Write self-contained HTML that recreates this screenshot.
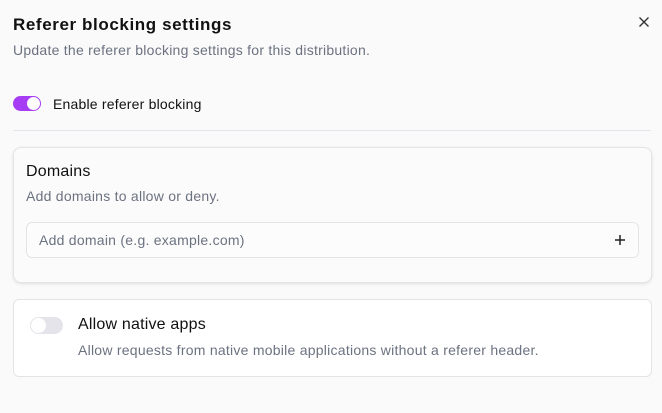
<!DOCTYPE html>
<html><head><style>
*{box-sizing:border-box;margin:0;padding:0}
body{width:662px;height:413px;background:#fafafa;font-family:"Liberation Sans",sans-serif;position:relative;overflow:hidden;color:#111}
.a{position:absolute;white-space:nowrap}
.s{font-size:14px;color:#6b7280;letter-spacing:0.25px}
</style></head><body>
<div class="a" style="left:13px;top:15px;font-size:17px;font-weight:bold;color:#111;letter-spacing:0.6px">Referer blocking settings</div>
<svg class="a" style="left:638px;top:16px" width="12" height="12" viewBox="0 0 12 12"><path d="M1.5 1.5L10.5 10.5M10.5 1.5L1.5 10.5" stroke="#333" stroke-width="1.4"/></svg>
<div class="a s" style="left:13px;top:42px">Update the referer blocking settings for this distribution.</div>
<div class="a" style="left:13px;top:96px;width:28px;height:15px;border-radius:8px;background:#a73cf5"></div>
<div class="a" style="left:27px;top:97px;width:13px;height:13px;border-radius:50%;background:#fff"></div>
<div class="a" style="left:53px;top:96px;font-size:14px;color:#111;letter-spacing:0.2px">Enable referer blocking</div>
<div class="a" style="left:13px;top:130px;width:638px;height:1px;background:#e4e4ea"></div>
<div class="a" style="left:13px;top:147px;width:639px;height:136px;border:1px solid #e4e4e7;border-radius:8px;background:#fbfbfb;box-shadow:0 1px 3px rgba(0,0,0,.1)"></div>
<div class="a" style="left:26px;top:163px;font-size:16px;color:#111;letter-spacing:0.2px">Domains</div>
<div class="a s" style="left:26px;top:188px">Add domains to allow or deny.</div>
<div class="a" style="left:26px;top:222px;width:613px;height:36px;border:1px solid #e4e4e7;border-radius:6px;background:#fcfcfc"></div>
<div class="a s" style="left:39px;top:232px">Add domain (e.g. example.com)</div>
<svg class="a" style="left:614px;top:234px" width="12" height="12" viewBox="0 0 12 12"><path d="M6 1V11M1 6H11" stroke="#222" stroke-width="1.5"/></svg>
<div class="a" style="left:13px;top:299px;width:639px;height:78px;border:1px solid #e4e4e7;border-radius:6px;background:#fff"></div>
<div class="a" style="left:30px;top:317px;width:33px;height:17px;border-radius:9px;background:#e4e4ea"></div>
<div class="a" style="left:31px;top:318px;width:15px;height:15px;border-radius:50%;background:#fff"></div>
<div class="a" style="left:78px;top:316px;font-size:16px;color:#111;letter-spacing:0.2px">Allow native apps</div>
<div class="a s" style="left:78px;top:342px;letter-spacing:0.25px">Allow requests from native mobile applications without a referer header.</div>
</body></html>
